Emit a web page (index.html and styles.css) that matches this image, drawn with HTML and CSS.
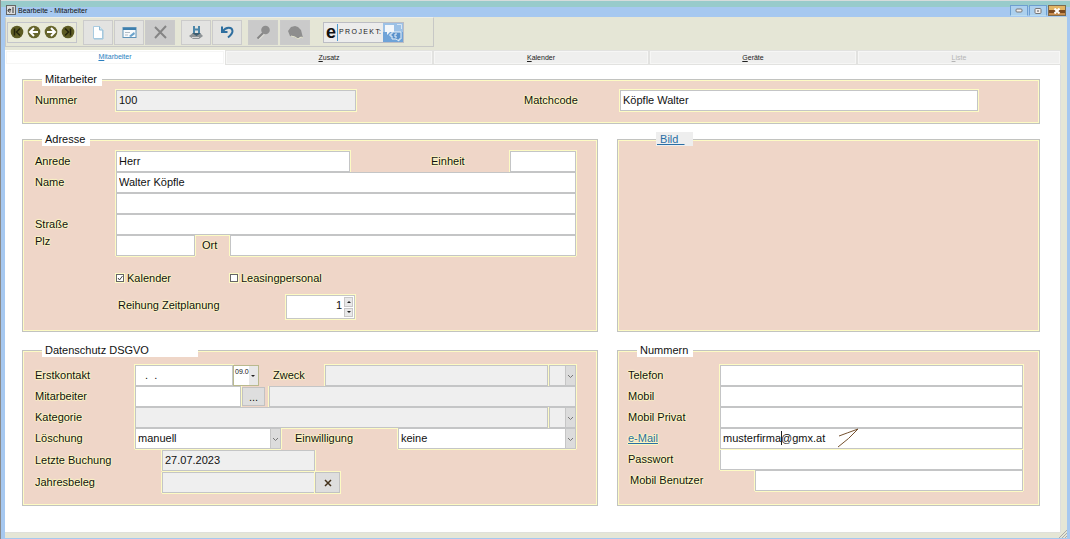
FILE: index.html
```html
<!DOCTYPE html>
<html lang="de">
<head>
<meta charset="utf-8">
<title>Bearbeite - Mitarbeiter</title>
<link rel="stylesheet" href="styles.css">
</head>
<body>
<div class="window">
  <header class="titlebar">
    <svg class="app-icon" width="10" height="10" viewBox="0 0 10 10"><rect x=".5" y=".5" width="9" height="9" fill="#dcdcdc" stroke="#666"/><path d="M2 5h3a1.500 1.500 0 1 0-.5 1.800M7 2v6" fill="none" stroke="#333"/></svg>
    <h1>Bearbeite - Mitarbeiter</h1>
    <div class="window-buttons">
      <button aria-label="Minimieren"><svg width="8" height="5" viewBox="0 0 8 5"><rect x="1" y="1" width="6" height="3" rx="1" fill="#f4f0ee" stroke="#777"/></svg></button>
      <button aria-label="Maximieren"><svg width="8" height="6" viewBox="0 0 8 6"><rect x="1" y=".5" width="6" height="5" rx="1" fill="#f4f0ee" stroke="#777"/><path d="M3 3h2" stroke="#555"/></svg></button>
      <button class="close" aria-label="Schließen"><svg width="8" height="6" viewBox="0 0 8 6"><path d="M1.500 .5l5 5M6.500 .5l-5 5" stroke="#fff" stroke-width="2"/></svg></button>
    </div>
  </header>

  <div class="client">
    <div class="toolbar">
      <div class="nav-group">
        <button aria-label="Erster"><svg width="14" height="14" viewBox="0 0 14 14"><circle cx="7" cy="7" r="6.300" fill="#5c5b23"/><path d="M4.500 3.500v7M10 3.500L6.500 7 10 10.500" fill="none" stroke="#24240c" stroke-width="1.500"/></svg></button>
        <button aria-label="Zurück"><svg width="14" height="14" viewBox="0 0 14 14"><circle cx="7" cy="7" r="6.300" fill="#66652c"/><path d="M7 3L3 7l4 4M3.500 7H11" fill="none" stroke="#fff" stroke-width="2"/></svg></button>
        <button aria-label="Weiter"><svg width="14" height="14" viewBox="0 0 14 14"><circle cx="7" cy="7" r="6.300" fill="#66652c"/><path d="M7 3l4 4-4 4M10.500 7H3" fill="none" stroke="#fff" stroke-width="2"/></svg></button>
        <button aria-label="Letzter"><svg width="14" height="14" viewBox="0 0 14 14"><circle cx="7" cy="7" r="6.300" fill="#5c5b23"/><path d="M9.500 3.500v7M4 3.500L7.500 7 4 10.500" fill="none" stroke="#24240c" stroke-width="1.500"/></svg></button>
      </div>
      <div class="tool-group">
        <button class="tool" aria-label="Neu"><svg width="14" height="15" viewBox="0 0 14 15"><path d="M2.500 1.500h6l3 3.500v8.500h-9z" fill="#fff" stroke="#a9cbe0"/><path d="M8.500 1.500V5h3" fill="#cfe6f2" stroke="#8db9d4"/><path d="M12 5v9H3" fill="none" stroke="#9cc4dc"/></svg></button>
        <button class="tool" aria-label="Bearbeiten"><svg width="15" height="13" viewBox="0 0 15 13"><rect x="1" y="1.500" width="13" height="10" fill="#f8fafc" stroke="#5f93b8"/><path d="M1 3h13" stroke="#3d7fae" stroke-width="2"/><path d="M3 6.500h5M3 9h3" stroke="#b0bcc6"/><path d="M7 10l5-4 1 2-4 3z" fill="#69a2cb"/></svg></button>
        <button class="tool off" aria-label="Löschen" disabled><svg width="15" height="14" viewBox="0 0 15 14"><path d="M2 2l11 11M13 1L2 13" stroke="#858585" stroke-width="2"/></svg></button>
      </div>
      <div class="tool-group">
        <button class="tool" aria-label="Speichern"><svg width="16" height="15" viewBox="0 0 16 15"><path d="M1 11l4-3h7l3 3-4 3H5z" fill="#8d9396"/><path d="M4 12.500h7" stroke="#d8d8d8"/><path d="M6 1v7M11 1v7M6 4.500h5" stroke="#4b86a9" stroke-width="2"/><path d="M4 8h9l-4.500 3z" fill="#3c5d70"/></svg></button>
        <button class="tool" aria-label="Rückgängig"><svg width="15" height="14" viewBox="0 0 15 14"><path d="M2 1.500V7h5.500" fill="none" stroke="#2f6f9f" stroke-width="2"/><path d="M2.500 6.500C6 1.500 12 1.500 12.500 6c0 3-2 4.500-4.500 6.500" fill="none" stroke="#2f6f9f" stroke-width="2"/></svg></button>
      </div>
      <div class="tool-group spaced">
        <button class="tool off" aria-label="Suchen" disabled><svg width="15" height="15" viewBox="0 0 15 15"><circle cx="9.500" cy="5" r="4.300" fill="#8e8e8e"/><path d="M7 8l-5.500 5.500" stroke="#868686" stroke-width="2"/><path d="M8 9.500l-5 5" stroke="#e4e4d8"/></svg></button>
        <button class="tool off" aria-label="Filter" disabled><svg width="17" height="15" viewBox="0 0 17 15"><path d="M1 6l3-4 4-1 3 1 3 3 1 4 1 4-3-1-2 2-4-2-4-1z" fill="#8e8e8e"/><path d="M4 11l4 1 3 2 3-2 2 1" fill="none" stroke="#e8e8d0"/></svg></button>
      </div>
      <div class="brand">
        <span class="brand-e">e</span><span class="brand-name">P&#8201;R&#8201;O&#8201;J&#8201;E&#8201;K&#8201;T:</span>
        <svg width="20" height="19" viewBox="0 0 20 19"><rect width="20" height="19" fill="#6fa3d8"/><path d="M0 0h20v9H0z" fill="#9cc1e6"/><path d="M2 2h9v7H7l-3 3V9H2z" fill="#f3f7fb"/><path d="M9 9h9v7h-2v2l-3-2H9v-3H7v-2h2z" fill="#5a91cb" stroke="#e8f1f9"/><path d="M14 11h-2v3h2" fill="none" stroke="#e8f1f9"/><path d="M14 1.500h4.500V6" fill="none" stroke="#d8e6f4"/></svg>
      </div>
    </div>

    <nav class="tabs">
      <a href="#" class="tab active"><u>M</u>itarbeiter</a>
      <a href="#" class="tab"><u>Z</u>usatz</a>
      <a href="#" class="tab"><u>K</u>alender</a>
      <a href="#" class="tab"><u>G</u>eräte</a>
      <a href="#" class="tab disabled"><u>L</u>iste</a>
    </nav>

    <main class="page">
      <fieldset class="panel wide">
        <legend>Mitarbeiter</legend>
        <div class="row">
          <label class="caption short" for="nummer">Nummer</label>
          <input class="field w-number" id="nummer" value="100" readonly>
          <label class="caption matchcode" for="matchcode">Matchcode</label>
          <input class="field w-match" id="matchcode" value="Köpfle Walter">
        </div>
      </fieldset>

      <fieldset class="panel address">
        <legend>Adresse</legend>
        <div class="row">
          <label class="caption short" for="anrede">Anrede</label>
          <input class="field grow" id="anrede" value="Herr">
          <label class="caption unit" for="einheit">Einheit</label>
          <input class="field w-unit" id="einheit">
        </div>
        <div class="row">
          <label class="caption short" for="name">Name</label>
          <input class="field grow" id="name" value="Walter Köpfle">
        </div>
        <div class="row">
          <span class="caption short"></span>
          <input class="field grow" aria-label="Name 2">
        </div>
        <div class="row">
          <label class="caption short" for="strasse">Straße</label>
          <input class="field grow" id="strasse">
        </div>
        <div class="row">
          <label class="caption short top" for="plz">Plz</label>
          <input class="field w-zip" id="plz">
          <label class="caption city" for="ort">Ort</label>
          <input class="field grow" id="ort">
        </div>
        <div class="checks">
          <label class="check"><input type="checkbox" checked>Kalender</label>
          <label class="check"><input type="checkbox">Leasingpersonal</label>
        </div>
        <div class="ranking">
          <label class="caption" for="reihung">Reihung Zeitplanung</label>
          <div class="spinner">
            <input type="text" inputmode="numeric" id="reihung" value="1">
            <div class="steps"><button aria-label="Mehr"><i class="up"></i></button><button aria-label="Weniger"><i class="down"></i></button></div>
          </div>
        </div>
      </fieldset>

      <fieldset class="panel picture">
        <legend><a href="#">&nbsp;Bild&nbsp;&nbsp;</a></legend>
      </fieldset>

      <fieldset class="panel lower">
        <legend class="long">Datenschutz DSGVO</legend>
        <div class="row">
          <label class="caption medium" for="erstkontakt">Erstkontakt</label>
          <input class="field w-date" id="erstkontakt" value="&nbsp;&nbsp;.&nbsp;&nbsp;.">
          <button class="date-pick" aria-label="Datum wählen"><span>09.0</span><i class="down"></i></button>
          <label class="caption purpose" for="zweck">Zweck</label>
          <input class="field grow" id="zweck" readonly>
          <select class="field w-mini muted" aria-label="Zweck Auswahl"><option></option></select>
        </div>
        <div class="row">
          <label class="caption medium" for="mitarbeiter">Mitarbeiter</label>
          <input class="field w-staff" id="mitarbeiter">
          <button class="more" aria-label="Mitarbeiter suchen">...</button>
          <input class="field grow" aria-label="Mitarbeiter Name" readonly>
        </div>
        <div class="row">
          <label class="caption medium" for="kategorie">Kategorie</label>
          <input class="field grow" id="kategorie" readonly>
          <select class="field w-mini muted" aria-label="Kategorie Auswahl"><option></option></select>
        </div>
        <div class="row">
          <label class="caption medium" for="loeschung">Löschung</label>
          <select class="field w-delete" id="loeschung"><option>manuell</option></select>
          <label class="caption consent" for="einwilligung">Einwilligung</label>
          <select class="field grow" id="einwilligung"><option>keine</option></select>
        </div>
        <div class="row tall">
          <label class="caption large" for="buchung">Letzte Buchung</label>
          <input class="field w-record" id="buchung" value="27.07.2023" readonly>
        </div>
        <div class="row tall">
          <label class="caption large" for="beleg">Jahresbeleg</label>
          <input class="field w-record" id="beleg" readonly>
          <button class="clear" aria-label="Jahresbeleg leeren"><svg width="8" height="8" viewBox="0 0 8 8"><path d="M1 1l6 6M7 1L1 7" stroke="#42301a" stroke-width="1.500"/></svg></button>
        </div>
      </fieldset>

      <fieldset class="panel lower numbers">
        <legend>Nummern</legend>
        <div class="row">
          <label class="caption phone" for="telefon">Telefon</label>
          <input class="field grow" id="telefon" type="tel">
        </div>
        <div class="row">
          <label class="caption phone" for="mobil">Mobil</label>
          <input class="field grow" id="mobil" type="tel">
        </div>
        <div class="row">
          <label class="caption phone" for="privat">Mobil Privat</label>
          <input class="field grow" id="privat" type="tel">
        </div>
        <div class="row">
          <span class="caption phone"><a href="#">e-Mail</a></span>
          <div class="mail grow">
            <input class="field" aria-label="e-Mail" value="musterfirma@gmx.at">
            <span class="caret"></span>
            <svg class="pointer" width="22" height="20" viewBox="0 0 22 20"><path d="M2 8Q10 5 21 1Q12 11 1 19" fill="none" stroke="#75512f"/></svg>
          </div>
        </div>
        <div class="row">
          <label class="caption phone" for="passwort">Passwort</label>
          <input class="field grow" id="passwort">
        </div>
        <div class="row">
          <label class="caption user" for="benutzer">Mobil Benutzer</label>
          <input class="field grow" id="benutzer">
        </div>
      </fieldset>
    </main>
    <svg class="grip" width="8" height="8" viewBox="0 0 8 8"><path d="M0 8L8 0M3 8l5-5M6 8l2-2" stroke="#aaa"/></svg>
  </div>
</div>
</body>
</html>
```

FILE: styles.css
```css
* {
  box-sizing: border-box;
}

body {
  margin: 0;
  font: 11px/14px "Liberation Sans", Arial, sans-serif;
  color: #111;
}

button,
input,
select {
  margin: 0;
  padding: 0;
  font: inherit;
  color: inherit;
}

.window {
  display: flex;
  flex-direction: column;
  min-height: 100vh;
  padding: 0 3px 1px 4px;
  background: #a6c8f0;
  border-left: 1px solid #8b8b8b;
}

/* Title bar */
.titlebar {
  display: flex;
  align-items: flex-end;
  gap: 2px;
  height: 17px;
  margin: 0 -3px 0 -4px;
  padding-left: 5px;
  background: linear-gradient(#d6dcdc 1px, #98cbcb 1px, #98cbcb 7px, #a6c8f0 7px);
}

.app-icon {
  margin-bottom: 2px;
}

.titlebar h1 {
  margin: 0;
  font-size: 7px;
  line-height: 13px;
  font-weight: normal;
}

.window-buttons {
  display: flex;
  gap: 1px;
  margin: 0 4px 1px auto;
}

.window-buttons button {
  display: flex;
  align-items: center;
  justify-content: center;
  width: 18px;
  height: 11px;
  background: #acd0ee;
  border: 1px solid #6d9fd0;
  border-bottom-color: #b9dcf0;
}

.window-buttons .close {
  background: linear-gradient(#e3b565 4px, #7b4a22 4px, #7b4a22 7px, #c98d50 7px);
  border-color: #7c6b50;
}

/* Client area */
.client {
  position: relative;
  display: flex;
  flex: 1;
  flex-direction: column;
  padding: 0 6px 5px 0;
  background: #e5e6d6;
}

.toolbar {
  display: flex;
  align-items: center;
  align-self: flex-start;
  gap: 6px;
  min-width: 429px;
  height: 30px;
  padding-left: 1px;
  border: 1px solid #c7c8c6;
  border-top-color: #eeeee6;
}

.nav-group {
  display: flex;
  align-items: center;
  justify-content: space-around;
  width: 70px;
  height: 21px;
  background: #e9ead9;
  border: 1px solid #c4c5cb;
}

.nav-group button {
  display: flex;
  padding: 0;
  background: none;
  border: 0;
}

.tool-group {
  display: flex;
  gap: 1px;
}

.tool-group.spaced {
  gap: 2px;
}

.tool {
  display: flex;
  align-items: center;
  justify-content: center;
  width: 30px;
  height: 25px;
  background: #e3e3e1;
  border: 1px solid #cbcbcb;
}

.tool.off {
  background: #cacaca;
}

.brand {
  display: flex;
  align-items: center;
  height: 21px;
  margin-left: 7px;
  background: #ececec;
  border: 1px solid #bcbdc4;
}

.brand-e {
  padding: 0 1px 0 2px;
  font: bold 18px/17px "Liberation Sans", Arial, sans-serif;
  border-right: 1px solid #4b9bd0;
}

.brand-name {
  padding: 0 2px 0 1px;
  font-size: 7px;
  color: #222;
}

/* Tabs */
.tabs {
  display: grid;
  grid-template-columns: 220fr 208fr 216fr 208fr 204fr;
  margin-top: 3px;
}

.tab {
  height: 15px;
  font-size: 7px;
  line-height: 14px;
  text-align: center;
  text-decoration: none;
  color: #222;
  background: #efefee;
  border: 1px solid #e2e2e0;
  box-shadow: inset 0 0 0 1px #f6f6f5;
}

.tab.active {
  line-height: 12px;
  color: #2a7fc0;
  background: #fff;
  border-color: #fff;
}

.tab.disabled {
  color: #b4b4b4;
}

/* Form page */
.page {
  display: grid;
  flex: 1;
  grid-template-columns: 576fr 423fr;
  grid-template-rows: auto auto auto;
  align-content: start;
  column-gap: 19px;
  padding: 7px 20px 24px 17px;
  background: #fff;
  border-right: 1px solid #dddedd;
  border-bottom: 1px solid #dfe0da;
}

.panel {
  min-width: 0;
  margin: 0;
  padding: 5px 21px 12px 12px;
  background: #efd6c8;
  border: 1px solid #c2c3c0;
  box-shadow: inset 0 0 0 1px #fdfbc4;
}

.panel.wide {
  grid-column: 1 / -1;
  margin-bottom: 8px;
  padding-top: 4px;
}

.panel.address,
.panel.picture {
  margin-bottom: 11px;
}

.panel.lower {
  padding-top: 8px;
}

.panel.numbers {
  padding: 8px 16px 12px 10px;
}

.panel legend {
  margin-left: 7px;
  padding: 0 5px 0 3px;
  background: #fff;
}

.panel legend.long {
  padding-right: 49px;
}

.panel.picture legend {
  margin-left: 26px;
  padding: 0 8px 0 1px;
  background: #eee;
}

.panel.numbers legend {
  margin-left: 9px;
}

.panel a {
  color: #2a6ea5;
}

.row {
  display: flex;
  align-items: stretch;
  height: 21px;
}

.row.tall {
  height: 22px;
  padding-top: 1px;
}

/* Captions */
.caption,
.check {
  text-shadow: 1px 0 1px #fdf9c0, -1px 0 1px #fdf9c0, 0 1px 1px #fdf9c0, 0 -1px 1px #fdf9c0;
}

.caption {
  flex: none;
  line-height: 20px;
}

.caption.top {
  line-height: 12px;
}

.caption.short {
  width: 81px;
}

.caption.medium {
  width: 100px;
}

.caption.large {
  width: 127px;
}

.caption.phone {
  width: 92px;
}

.caption.user {
  width: 127px;
  padding-left: 2px;
}

.caption.matchcode {
  width: 96px;
  margin-left: auto;
}

.caption.unit {
  width: 79px;
  margin-left: 81px;
}

.caption.city {
  width: 35px;
  padding-left: 7px;
}

.caption.purpose {
  width: 52px;
  margin-left: 14px;
}

.caption.consent {
  width: 103px;
  margin-left: 14px;
}

/* Fields */
.field {
  min-width: 0;
  padding: 0 2px 2px;
  background: #fff;
  border: 1px solid #c4c5c6;
  border-radius: 0;
  box-shadow: 0 0 0 1px #fdfbc4;
  outline: 0;
}

.row + .row .field {
  box-shadow: -1px 0 #fdfbc4, 1px 0 #fdfbc4, 0 1px #fdfbc4;
}

.field:read-only:not(select),
.field.muted {
  background-color: #efefef;
}

.grow {
  flex: 1;
}

.w-number {
  width: 240px;
}

.w-match {
  width: 358px;
  margin-right: 40px;
}

.w-unit {
  width: 66px;
}

.w-zip {
  width: 79px;
}

.w-date {
  width: 98px;
  padding-left: 3px;
}

.w-staff {
  width: 106px;
}

.w-delete {
  width: 146px;
}

.w-record {
  width: 153px;
}

.w-mini {
  width: 27px;
  margin-left: 1px;
}

select.field {
  appearance: none;
  padding-right: 12px;
  background-image:
    url("data:image/svg+xml,%3Csvg xmlns='http://www.w3.org/2000/svg' width='10' height='19'%3E%3Crect width='10' height='19' fill='%23dcdcdc'/%3E%3Cpath d='M.5 0v19' stroke='%23c6c6c6'/%3E%3Cpath d='M3 9l2.500 2.500L8 9' fill='none' stroke='%23777'/%3E%3C/svg%3E");
  background-repeat: no-repeat;
  background-position: right top;
}

/* Check boxes and ranking */
.checks {
  display: grid;
  grid-template-columns: 114px 1fr;
  margin: 15px 0 0 81px;
}

.check {
  display: flex;
  align-items: center;
  gap: 3px;
}

.check input {
  appearance: none;
  width: 8px;
  height: 8px;
  background: #fff;
  border: 1px solid #666;
  box-shadow: 0 0 0 1px #fdfbc4;
}

.check input:checked {
  background-image: url("data:image/svg+xml,%3Csvg xmlns='http://www.w3.org/2000/svg' width='6' height='6'%3E%3Cpath d='M1 3l1.500 2L5.500 1' fill='none' stroke='%23444'/%3E%3C/svg%3E");
}

.ranking {
  display: flex;
  margin: 10px 0 0 83px;
}

.ranking .caption {
  width: 168px;
}

.spinner {
  display: flex;
  width: 69px;
  height: 24px;
  background: #fff;
  border: 1px solid #c6c7c6;
  box-shadow: 0 0 0 1px #fdfbc4;
}

.spinner input {
  flex: 1;
  min-width: 0;
  padding: 0 1px 4px;
  text-align: right;
  background: none;
  border: 0;
}

.steps {
  display: flex;
  flex-direction: column;
  gap: 1px;
  padding: 1px;
}

.steps button {
  display: flex;
  flex: 1;
  align-items: center;
  justify-content: center;
  width: 9px;
  background: #e8e8e8;
  border: 1px solid #c8c8c8;
}

.up,
.down {
  border: 2px solid transparent;
}

.up {
  border-top-width: 0;
  border-bottom-color: #222;
}

.down {
  border-bottom-width: 0;
  border-top-color: #222;
}

/* Small buttons */
.date-pick {
  display: flex;
  align-items: center;
  justify-content: space-between;
  width: 26px;
  padding: 0 3px 0 1px;
  background: linear-gradient(90deg, #fff 15px, #e8e8e8 15px);
  border: 1px solid #b9b98e;
}

.date-pick span {
  align-self: flex-start;
  font-size: 7px;
  line-height: 12px;
}

.more,
.clear {
  background: #dedede;
  border: 1px solid #c2c2c2;
}

.more {
  width: 23px;
  margin: 1px 4px 1px 1px;
}

.clear {
  display: flex;
  align-items: center;
  justify-content: center;
  width: 25px;
  box-shadow: 0 0 0 1px #fdfbc4;
}

/* Mail field with drawn marks */
.mail {
  position: relative;
  display: flex;
}

.mail .field {
  flex: 1;
}

.caret {
  position: absolute;
  top: 3px;
  left: 61px;
  width: 1px;
  height: 14px;
  background: #222;
}

.pointer {
  position: absolute;
  top: 0;
  left: 117px;
}

.grip {
  position: absolute;
  right: 0;
  bottom: 0;
}
```
